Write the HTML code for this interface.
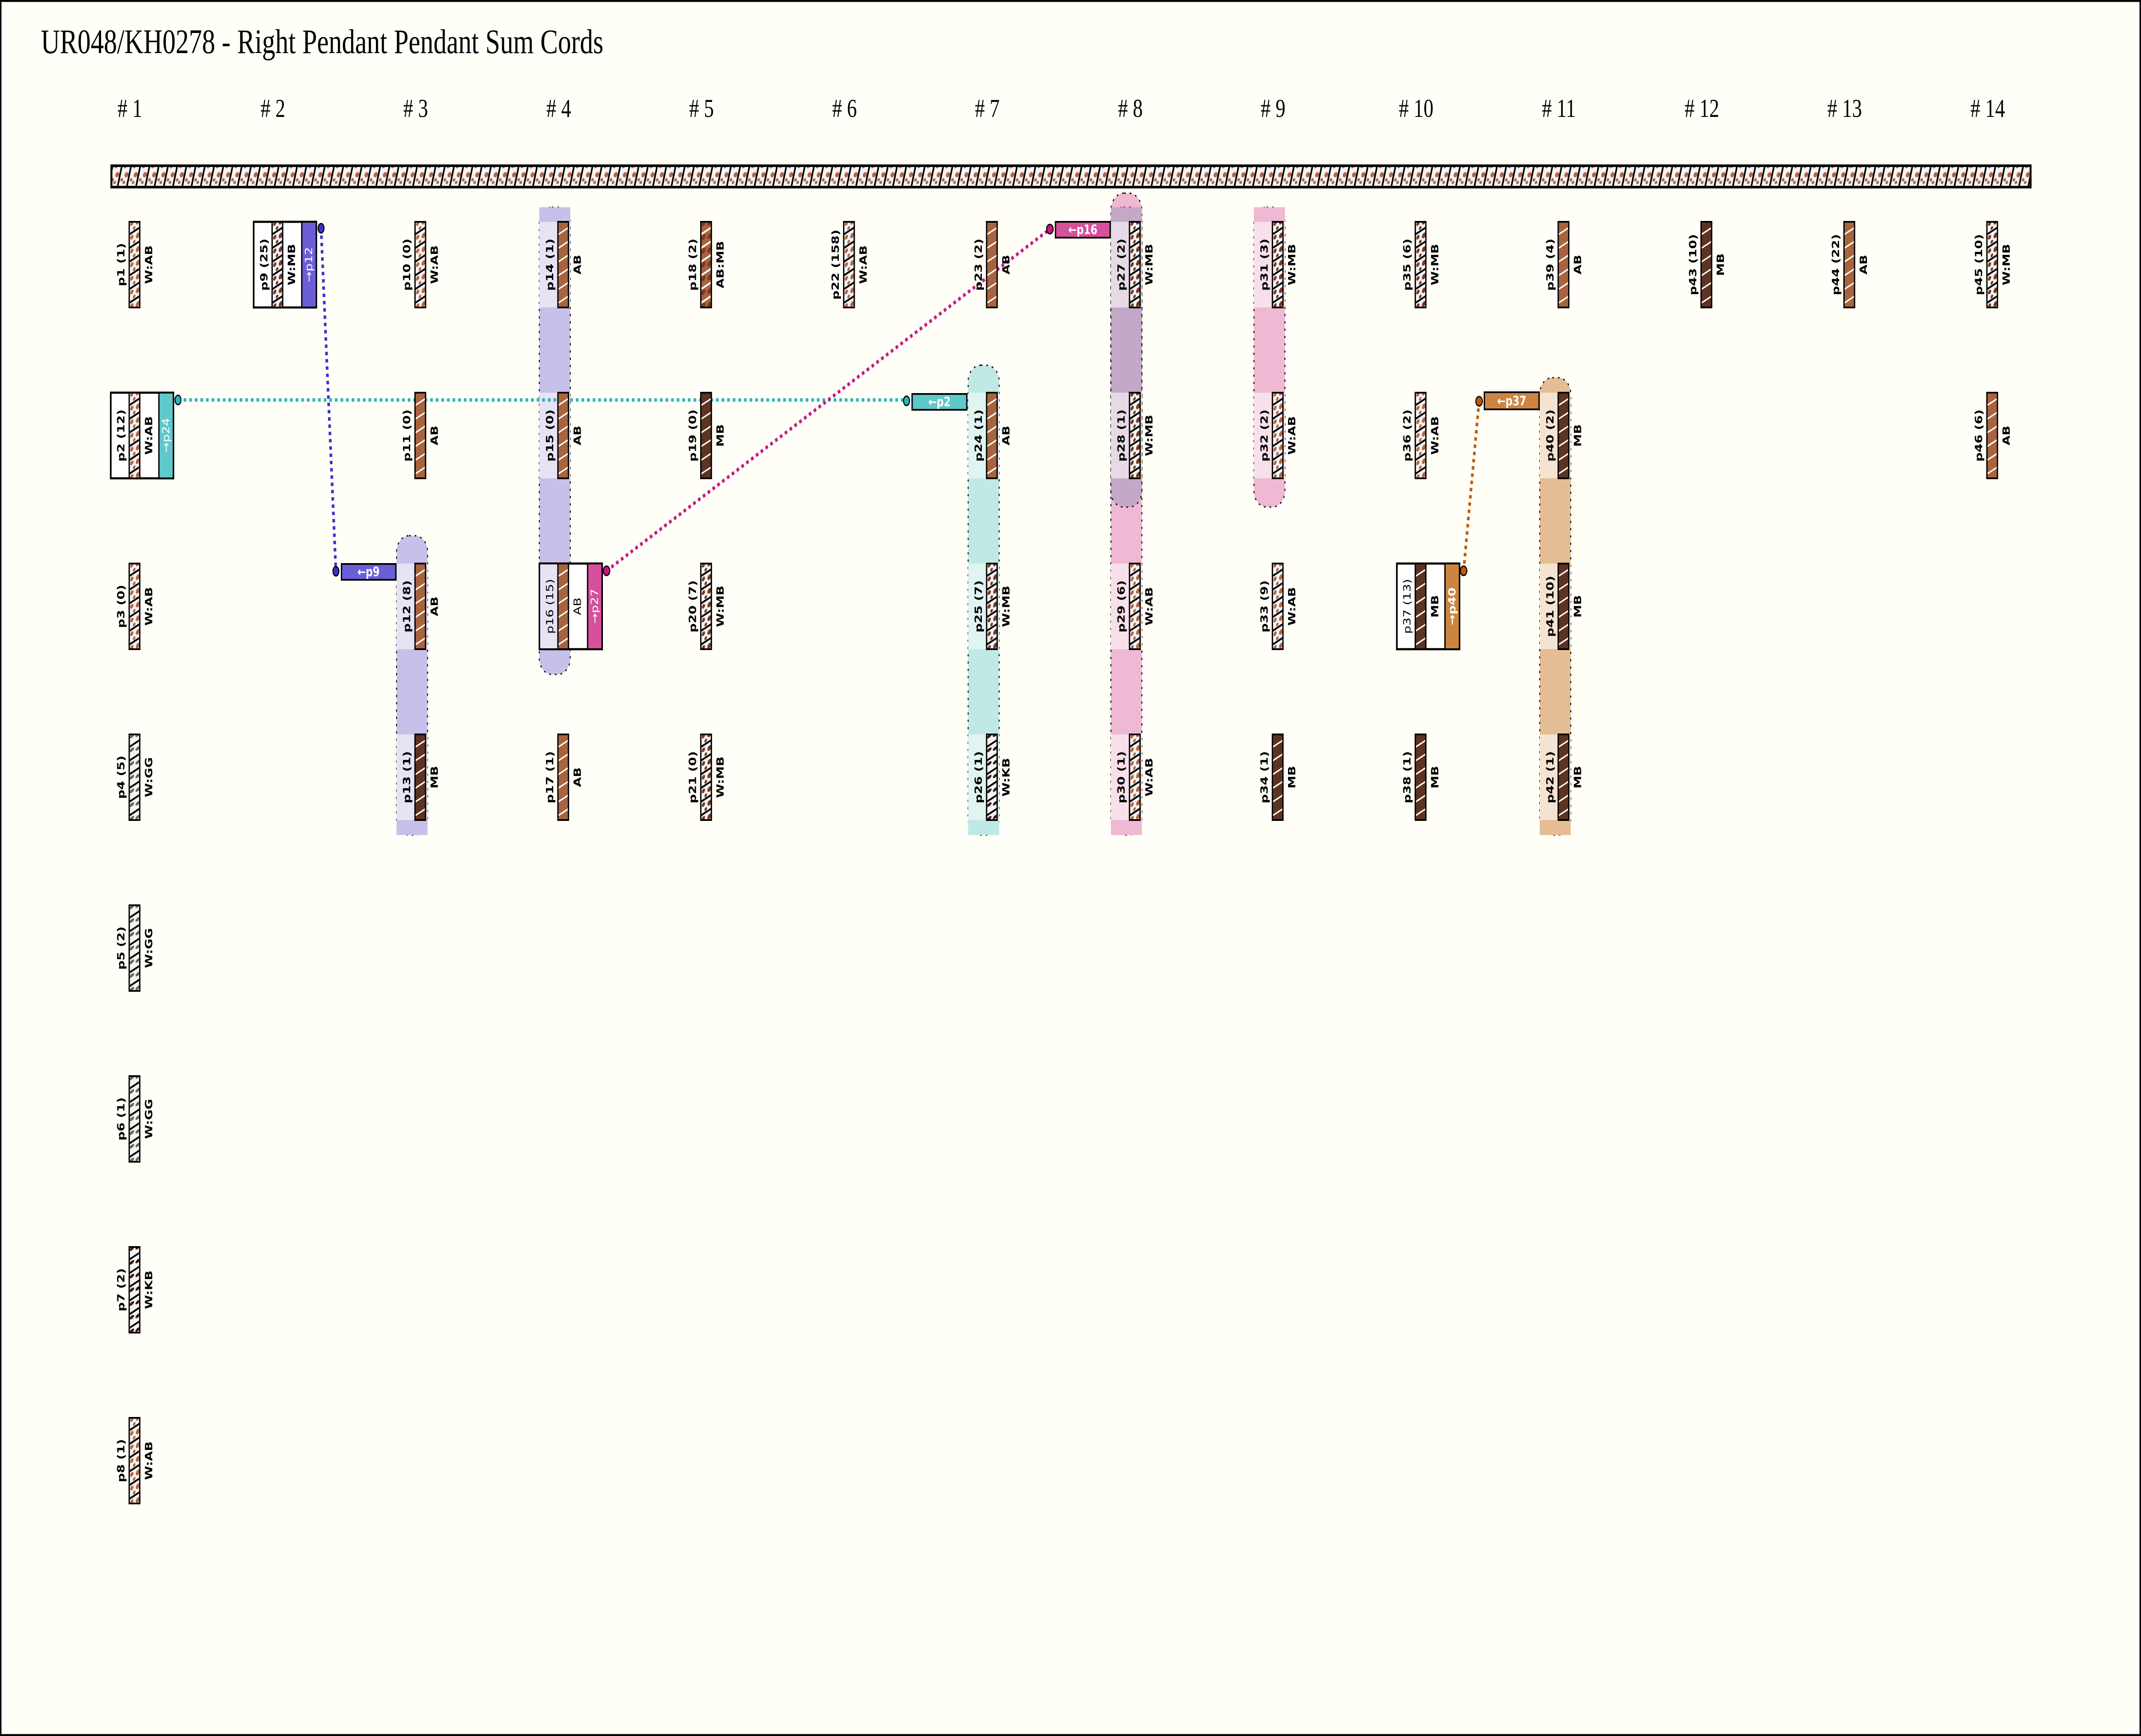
<!DOCTYPE html>
<html><head><meta charset="utf-8">
<style>
html,body{margin:0;padding:0;background:#fffef7;width:100%;height:100%;overflow:hidden;}
svg{display:block;width:100vw;height:100vh;}
text.l{font-family:"DejaVu Sans","Liberation Sans",sans-serif;font-weight:bold;font-size:30px;text-anchor:middle;dominant-baseline:central;fill:#000;}
text.w{font-family:"DejaVu Sans","Liberation Sans",sans-serif;font-weight:bold;font-size:30px;text-anchor:middle;dominant-baseline:central;fill:#fff;}
text.h{font-family:"Liberation Serif",serif;font-size:60px;text-anchor:middle;fill:#000;}
rect.c{stroke:#000;stroke-width:4;}
</style></head><body>
<svg viewBox="0 0 6495 4054" preserveAspectRatio="none" xmlns="http://www.w3.org/2000/svg">
<defs>
<pattern id="bar" patternUnits="userSpaceOnUse" width="28" height="54" patternTransform="skewX(-15)">
<rect width="28" height="54" fill="#f3f3f6"/>
<circle cx="8" cy="10" r="5" fill="#b5673e"/><circle cx="17" cy="30" r="6" fill="#b5673e"/><circle cx="6" cy="42" r="4" fill="#b5673e"/><circle cx="14" cy="48" r="4" fill="#b5673e"/>
<rect x="23" width="5" height="54" fill="#000"/>
</pattern>
<pattern id="wab" patternUnits="userSpaceOnUse" width="40" height="32" patternTransform="skewY(-27)">
<rect width="40" height="32" fill="#f3f3f6"/><circle cx="8" cy="8" r="5" fill="#b5673e"/><circle cx="26" cy="13" r="6" fill="#b5673e"/><circle cx="15" cy="22" r="4" fill="#b5673e"/><rect y="27" width="40" height="5" fill="#000"/></pattern>
<pattern id="wmb" patternUnits="userSpaceOnUse" width="40" height="32" patternTransform="skewY(-27)">
<rect width="40" height="32" fill="#f3f3f6"/><circle cx="8" cy="8" r="5" fill="#7a3a1e"/><circle cx="26" cy="13" r="6" fill="#7a3a1e"/><circle cx="15" cy="22" r="4" fill="#7a3a1e"/><rect y="27" width="40" height="5" fill="#000"/></pattern>
<pattern id="wgg" patternUnits="userSpaceOnUse" width="40" height="32" patternTransform="skewY(-27)">
<rect width="40" height="32" fill="#f3f3f6"/><ellipse cx="8" cy="8" rx="7" ry="4" fill="#646b5a"/><ellipse cx="26" cy="14" rx="7" ry="4" fill="#646b5a"/><rect y="27" width="40" height="5" fill="#000"/></pattern>
<pattern id="wkb" patternUnits="userSpaceOnUse" width="40" height="32" patternTransform="skewY(-27)">
<rect width="40" height="32" fill="#f3f3f6"/><ellipse cx="8" cy="8" rx="7" ry="4" fill="#3c1a10"/><ellipse cx="26" cy="14" rx="7" ry="4" fill="#3c1a10"/><rect y="27" width="40" height="5" fill="#000"/></pattern>
<pattern id="ab" patternUnits="userSpaceOnUse" width="40" height="32" patternTransform="skewY(-27)">
<rect width="40" height="32" fill="#a8643f"/><rect y="28" width="40" height="4" fill="#fff"/></pattern>
<pattern id="mb" patternUnits="userSpaceOnUse" width="40" height="32" patternTransform="skewY(-27)">
<rect width="40" height="32" fill="#5e3321"/><rect y="28" width="40" height="4" fill="#fff"/></pattern>
<pattern id="abmb" patternUnits="userSpaceOnUse" width="40" height="32" patternTransform="skewY(-27)">
<rect width="40" height="32" fill="#a8643f"/><circle cx="8" cy="8" r="6" fill="#7a3a1e"/><circle cx="26" cy="15" r="6" fill="#7a3a1e"/><rect y="27" width="40" height="5" fill="#fff"/></pattern>
</defs>

<rect x="2" y="2" width="6491" height="4050" fill="#fffef7" stroke="#000" stroke-width="5"/>
<text x="124" y="124" style="font-family:'Liberation Serif',serif;font-size:80px;">UR048/KH0278 - Right Pendant Pendant Sum Cords</text>

<g>
<text class="h" x="394" y="273"># 1</text>
<text class="h" x="828" y="273"># 2</text>
<text class="h" x="1261" y="273"># 3</text>
<text class="h" x="1695" y="273"># 4</text>
<text class="h" x="2128" y="273"># 5</text>
<text class="h" x="2562" y="273"># 6</text>
<text class="h" x="2995" y="273"># 7</text>
<text class="h" x="3429" y="273"># 8</text>
<text class="h" x="3862" y="273"># 9</text>
<text class="h" x="4296" y="273"># 10</text>
<text class="h" x="4729" y="273"># 11</text>
<text class="h" x="5163" y="273"># 12</text>
<text class="h" x="5596" y="273"># 13</text>
<text class="h" x="6030" y="273"># 14</text>
</g>

<rect x="338" y="387" width="5822" height="50" fill="url(#bar)" stroke="#000" stroke-width="6"/>

<g stroke="#000" stroke-width="3" stroke-dasharray="5 12">
<rect x="1203" y="1251" width="94" height="699" rx="38" fill="#c6c0ea"/>
<rect x="1203" y="1900" width="94" height="50" fill="#c6c0ea" stroke="none"/>
<rect x="1636" y="484" width="94" height="1091" rx="38" fill="#c6c0ea"/>
<rect x="1636" y="484" width="94" height="60" fill="#c6c0ea" stroke="none"/>
<rect x="2937" y="853" width="94" height="1097" rx="38" fill="#c0e9e5"/>
<rect x="2937" y="1900" width="94" height="50" fill="#c0e9e5" stroke="none"/>
<rect x="3370" y="451" width="94" height="1499" rx="40" fill="#efb8d3"/>
<rect x="3370" y="1900" width="94" height="50" fill="#efb8d3" stroke="none"/>
<rect x="3370" y="484" width="94" height="700" rx="38" fill="#c4a8c8"/>
<rect x="3370" y="484" width="94" height="60" fill="#c4a8c8" stroke="none"/>
<rect x="3804" y="484" width="94" height="700" rx="38" fill="#efb8d3"/>
<rect x="3804" y="484" width="94" height="60" fill="#efb8d3" stroke="none"/>
<rect x="4671" y="882" width="94" height="1068" rx="38" fill="#e4bd94"/>
<rect x="4671" y="1900" width="94" height="50" fill="#e4bd94" stroke="none"/>
</g>
<g>
<rect x="1203" y="1316" width="94" height="200" fill="#e6e3f4"/>
<rect x="1203" y="1715" width="94" height="200" fill="#e6e3f4"/>
<rect x="1636" y="518" width="94" height="200" fill="#e6e3f4"/>
<rect x="1636" y="917" width="94" height="200" fill="#e6e3f4"/>
<rect x="2937" y="917" width="94" height="200" fill="#e0f4f1"/>
<rect x="2937" y="1316" width="94" height="200" fill="#e0f4f1"/>
<rect x="2937" y="1715" width="94" height="200" fill="#e0f4f1"/>
<rect x="3370" y="518" width="94" height="200" fill="#e6dae6"/>
<rect x="3370" y="917" width="94" height="200" fill="#e6dae6"/>
<rect x="3370" y="1316" width="94" height="200" fill="#f7e0ea"/>
<rect x="3370" y="1715" width="94" height="200" fill="#f7e0ea"/>
<rect x="3804" y="518" width="94" height="200" fill="#f7e0ea"/>
<rect x="3804" y="917" width="94" height="200" fill="#f7e0ea"/>
<rect x="4671" y="917" width="94" height="200" fill="#f3e3d0"/>
<rect x="4671" y="1316" width="94" height="200" fill="#f3e3d0"/>
<rect x="4671" y="1715" width="94" height="200" fill="#f3e3d0"/>
</g>

<g stroke-width="8" stroke-dasharray="8 9" fill="none">
<line x1="974" y1="533" x2="1019" y2="1334" stroke="#3b2fd1"/>
<line x1="540" y1="934" x2="2750" y2="934" stroke="#2bb5ba"/>
<line x1="1840" y1="1333" x2="3185" y2="535" stroke="#c8177e"/>
<line x1="4440" y1="1333" x2="4487" y2="937" stroke="#c05a00"/>
</g>
<g stroke="#000" stroke-width="3">
<ellipse cx="974" cy="533" rx="9" ry="11" fill="#3b2fd1"/>
<ellipse cx="1019" cy="1334" rx="9" ry="11" fill="#3b2fd1"/>
<ellipse cx="540" cy="934" rx="9" ry="11" fill="#2bb5ba"/>
<ellipse cx="2750" cy="936" rx="9" ry="11" fill="#2bb5ba"/>
<ellipse cx="1840" cy="1333" rx="10" ry="11" fill="#c8177e"/>
<ellipse cx="3185" cy="535" rx="10" ry="11" fill="#c8177e"/>
<ellipse cx="4440" cy="1333" rx="10" ry="11" fill="#c05a00"/>
<ellipse cx="4487" cy="937" rx="10" ry="11" fill="#c05a00"/>
</g>
<g stroke="#000" stroke-width="4">
<rect x="1036" y="1317" width="165" height="37" fill="#6a5fd6"/>
<rect x="2767" y="920" width="166" height="37" fill="#5ec8ca"/>
<rect x="3202" y="518" width="166" height="37" fill="#d6509c"/>
<rect x="4503" y="916" width="166" height="40" fill="#cc8540"/>
</g>
<text class="w" x="1118" y="1336">←p9</text>
<text class="w" x="2850" y="939">←p2</text>
<text class="w" x="3285" y="537">←p16</text>
<text class="w" x="4586" y="937">←p37</text>

<g transform="translate(392,518)"><rect class="c" width="32" height="200" fill="url(#wab)"/><text class="l" transform="translate(-24,100) rotate(-90)">p1 (1)</text><text class="l" transform="translate(60,100) rotate(-90)">W:AB</text></g>
<g transform="translate(392,917)"><rect x="-56" width="190" height="200" fill="#fff" stroke="#000" stroke-width="5"/><rect x="90" width="44" height="200" fill="#5ec8ca" stroke="#000" stroke-width="4"/><rect class="c" width="32" height="200" fill="url(#wab)"/><text class="l" transform="translate(-24,100) rotate(-90)">p2 (12)</text><text class="l" transform="translate(60,100) rotate(-90)">W:AB</text><text class="w" style="font-weight:normal" transform="translate(112,100) rotate(-90)">→p24</text></g>
<g transform="translate(392,1316)"><rect class="c" width="32" height="200" fill="url(#wab)"/><text class="l" transform="translate(-24,100) rotate(-90)">p3 (0)</text><text class="l" transform="translate(60,100) rotate(-90)">W:AB</text></g>
<g transform="translate(392,1715)"><rect class="c" width="32" height="200" fill="url(#wgg)"/><text class="l" transform="translate(-24,100) rotate(-90)">p4 (5)</text><text class="l" transform="translate(60,100) rotate(-90)">W:GG</text></g>
<g transform="translate(392,2114)"><rect class="c" width="32" height="200" fill="url(#wgg)"/><text class="l" transform="translate(-24,100) rotate(-90)">p5 (2)</text><text class="l" transform="translate(60,100) rotate(-90)">W:GG</text></g>
<g transform="translate(392,2513)"><rect class="c" width="32" height="200" fill="url(#wgg)"/><text class="l" transform="translate(-24,100) rotate(-90)">p6 (1)</text><text class="l" transform="translate(60,100) rotate(-90)">W:GG</text></g>
<g transform="translate(392,2912)"><rect class="c" width="32" height="200" fill="url(#wkb)"/><text class="l" transform="translate(-24,100) rotate(-90)">p7 (2)</text><text class="l" transform="translate(60,100) rotate(-90)">W:KB</text></g>
<g transform="translate(392,3311)"><rect class="c" width="32" height="200" fill="url(#wab)"/><text class="l" transform="translate(-24,100) rotate(-90)">p8 (1)</text><text class="l" transform="translate(60,100) rotate(-90)">W:AB</text></g>

<g transform="translate(825.5,518)"><rect x="-56" width="190" height="200" fill="#fff" stroke="#000" stroke-width="5"/><rect x="90" width="44" height="200" fill="#6a5fd6" stroke="#000" stroke-width="4"/><rect class="c" width="32" height="200" fill="url(#wmb)"/><text class="l" transform="translate(-24,100) rotate(-90)">p9 (25)</text><text class="l" transform="translate(60,100) rotate(-90)">W:MB</text><text class="w" style="font-weight:normal" transform="translate(112,100) rotate(-90)">→p12</text></g>

<g transform="translate(1259,518)"><rect class="c" width="32" height="200" fill="url(#wab)"/><text class="l" transform="translate(-24,100) rotate(-90)">p10 (0)</text><text class="l" transform="translate(60,100) rotate(-90)">W:AB</text></g>
<g transform="translate(1259,917)"><rect class="c" width="32" height="200" fill="url(#ab)"/><text class="l" transform="translate(-24,100) rotate(-90)">p11 (0)</text><text class="l" transform="translate(60,100) rotate(-90)">AB</text></g>
<g transform="translate(1259,1316)"><rect class="c" width="32" height="200" fill="url(#ab)"/><text class="l" transform="translate(-24,100) rotate(-90)">p12 (8)</text><text class="l" transform="translate(60,100) rotate(-90)">AB</text></g>
<g transform="translate(1259,1715)"><rect class="c" width="32" height="200" fill="url(#mb)"/><text class="l" transform="translate(-24,100) rotate(-90)">p13 (1)</text><text class="l" transform="translate(60,100) rotate(-90)">MB</text></g>

<g transform="translate(1692.5,518)"><rect class="c" width="32" height="200" fill="url(#ab)"/><text class="l" transform="translate(-24,100) rotate(-90)">p14 (1)</text><text class="l" transform="translate(60,100) rotate(-90)">AB</text></g>
<g transform="translate(1692.5,917)"><rect class="c" width="32" height="200" fill="url(#ab)"/><text class="l" transform="translate(-24,100) rotate(-90)">p15 (0)</text><text class="l" transform="translate(60,100) rotate(-90)">AB</text></g>
<g transform="translate(1692.5,1316)"><rect x="-56" width="190" height="200" fill="#fff" stroke="#000" stroke-width="5"/><rect x="-54" y="2" width="54" height="196" fill="#e6e3f4"/><rect x="90" width="44" height="200" fill="#d6509c" stroke="#000" stroke-width="4"/><rect class="c" width="32" height="200" fill="url(#ab)"/><text class="l" style="font-weight:normal" transform="translate(-24,100) rotate(-90)">p16 (15)</text><text class="l" style="font-weight:normal" transform="translate(60,100) rotate(-90)">AB</text><text class="w" style="font-weight:normal" transform="translate(112,100) rotate(-90)">→p27</text></g>
<g transform="translate(1692.5,1715)"><rect class="c" width="32" height="200" fill="url(#ab)"/><text class="l" transform="translate(-24,100) rotate(-90)">p17 (1)</text><text class="l" transform="translate(60,100) rotate(-90)">AB</text></g>

<g transform="translate(2126,518)"><rect class="c" width="32" height="200" fill="url(#abmb)"/><text class="l" transform="translate(-24,100) rotate(-90)">p18 (2)</text><text class="l" transform="translate(60,100) rotate(-90)">AB:MB</text></g>
<g transform="translate(2126,917)"><rect class="c" width="32" height="200" fill="url(#mb)"/><text class="l" transform="translate(-24,100) rotate(-90)">p19 (0)</text><text class="l" transform="translate(60,100) rotate(-90)">MB</text></g>
<g transform="translate(2126,1316)"><rect class="c" width="32" height="200" fill="url(#wmb)"/><text class="l" transform="translate(-24,100) rotate(-90)">p20 (7)</text><text class="l" transform="translate(60,100) rotate(-90)">W:MB</text></g>
<g transform="translate(2126,1715)"><rect class="c" width="32" height="200" fill="url(#wmb)"/><text class="l" transform="translate(-24,100) rotate(-90)">p21 (0)</text><text class="l" transform="translate(60,100) rotate(-90)">W:MB</text></g>

<g transform="translate(2559.5,518)"><rect class="c" width="32" height="200" fill="url(#wab)"/><text class="l" transform="translate(-24,100) rotate(-90)">p22 (158)</text><text class="l" transform="translate(60,100) rotate(-90)">W:AB</text></g>

<g transform="translate(2993,518)"><rect class="c" width="32" height="200" fill="url(#ab)"/><text class="l" transform="translate(-24,100) rotate(-90)">p23 (2)</text><text class="l" transform="translate(60,100) rotate(-90)">AB</text></g>
<g transform="translate(2993,917)"><rect class="c" width="32" height="200" fill="url(#ab)"/><text class="l" transform="translate(-24,100) rotate(-90)">p24 (1)</text><text class="l" transform="translate(60,100) rotate(-90)">AB</text></g>
<g transform="translate(2993,1316)"><rect class="c" width="32" height="200" fill="url(#wmb)"/><text class="l" transform="translate(-24,100) rotate(-90)">p25 (7)</text><text class="l" transform="translate(60,100) rotate(-90)">W:MB</text></g>
<g transform="translate(2993,1715)"><rect class="c" width="32" height="200" fill="url(#wkb)"/><text class="l" transform="translate(-24,100) rotate(-90)">p26 (1)</text><text class="l" transform="translate(60,100) rotate(-90)">W:KB</text></g>

<g transform="translate(3426.5,518)"><rect class="c" width="32" height="200" fill="url(#wmb)"/><text class="l" transform="translate(-24,100) rotate(-90)">p27 (2)</text><text class="l" transform="translate(60,100) rotate(-90)">W:MB</text></g>
<g transform="translate(3426.5,917)"><rect class="c" width="32" height="200" fill="url(#wmb)"/><text class="l" transform="translate(-24,100) rotate(-90)">p28 (1)</text><text class="l" transform="translate(60,100) rotate(-90)">W:MB</text></g>
<g transform="translate(3426.5,1316)"><rect class="c" width="32" height="200" fill="url(#wab)"/><text class="l" transform="translate(-24,100) rotate(-90)">p29 (6)</text><text class="l" transform="translate(60,100) rotate(-90)">W:AB</text></g>
<g transform="translate(3426.5,1715)"><rect class="c" width="32" height="200" fill="url(#wab)"/><text class="l" transform="translate(-24,100) rotate(-90)">p30 (1)</text><text class="l" transform="translate(60,100) rotate(-90)">W:AB</text></g>

<g transform="translate(3860,518)"><rect class="c" width="32" height="200" fill="url(#wmb)"/><text class="l" transform="translate(-24,100) rotate(-90)">p31 (3)</text><text class="l" transform="translate(60,100) rotate(-90)">W:MB</text></g>
<g transform="translate(3860,917)"><rect class="c" width="32" height="200" fill="url(#wab)"/><text class="l" transform="translate(-24,100) rotate(-90)">p32 (2)</text><text class="l" transform="translate(60,100) rotate(-90)">W:AB</text></g>
<g transform="translate(3860,1316)"><rect class="c" width="32" height="200" fill="url(#wab)"/><text class="l" transform="translate(-24,100) rotate(-90)">p33 (9)</text><text class="l" transform="translate(60,100) rotate(-90)">W:AB</text></g>
<g transform="translate(3860,1715)"><rect class="c" width="32" height="200" fill="url(#mb)"/><text class="l" transform="translate(-24,100) rotate(-90)">p34 (1)</text><text class="l" transform="translate(60,100) rotate(-90)">MB</text></g>

<g transform="translate(4293.5,518)"><rect class="c" width="32" height="200" fill="url(#wmb)"/><text class="l" transform="translate(-24,100) rotate(-90)">p35 (6)</text><text class="l" transform="translate(60,100) rotate(-90)">W:MB</text></g>
<g transform="translate(4293.5,917)"><rect class="c" width="32" height="200" fill="url(#wab)"/><text class="l" transform="translate(-24,100) rotate(-90)">p36 (2)</text><text class="l" transform="translate(60,100) rotate(-90)">W:AB</text></g>
<g transform="translate(4293.5,1316)"><rect x="-56" width="190" height="200" fill="#fff" stroke="#000" stroke-width="5"/><rect x="90" width="44" height="200" fill="#cc8540" stroke="#000" stroke-width="4"/><rect class="c" width="32" height="200" fill="url(#mb)"/><text class="l" style="font-weight:normal" transform="translate(-24,100) rotate(-90)">p37 (13)</text><text class="l" transform="translate(60,100) rotate(-90)">MB</text><text class="w" transform="translate(112,100) rotate(-90)">→p40</text></g>
<g transform="translate(4293.5,1715)"><rect class="c" width="32" height="200" fill="url(#mb)"/><text class="l" transform="translate(-24,100) rotate(-90)">p38 (1)</text><text class="l" transform="translate(60,100) rotate(-90)">MB</text></g>

<g transform="translate(4727,518)"><rect class="c" width="32" height="200" fill="url(#ab)"/><text class="l" transform="translate(-24,100) rotate(-90)">p39 (4)</text><text class="l" transform="translate(60,100) rotate(-90)">AB</text></g>
<g transform="translate(4727,917)"><rect class="c" width="32" height="200" fill="url(#mb)"/><text class="l" transform="translate(-24,100) rotate(-90)">p40 (2)</text><text class="l" transform="translate(60,100) rotate(-90)">MB</text></g>
<g transform="translate(4727,1316)"><rect class="c" width="32" height="200" fill="url(#mb)"/><text class="l" transform="translate(-24,100) rotate(-90)">p41 (10)</text><text class="l" transform="translate(60,100) rotate(-90)">MB</text></g>
<g transform="translate(4727,1715)"><rect class="c" width="32" height="200" fill="url(#mb)"/><text class="l" transform="translate(-24,100) rotate(-90)">p42 (1)</text><text class="l" transform="translate(60,100) rotate(-90)">MB</text></g>

<g transform="translate(5160.5,518)"><rect class="c" width="32" height="200" fill="url(#mb)"/><text class="l" transform="translate(-24,100) rotate(-90)">p43 (10)</text><text class="l" transform="translate(60,100) rotate(-90)">MB</text></g>
<g transform="translate(5594,518)"><rect class="c" width="32" height="200" fill="url(#ab)"/><text class="l" transform="translate(-24,100) rotate(-90)">p44 (22)</text><text class="l" transform="translate(60,100) rotate(-90)">AB</text></g>
<g transform="translate(6027.5,518)"><rect class="c" width="32" height="200" fill="url(#wmb)"/><text class="l" transform="translate(-24,100) rotate(-90)">p45 (10)</text><text class="l" transform="translate(60,100) rotate(-90)">W:MB</text></g>
<g transform="translate(6027.5,917)"><rect class="c" width="32" height="200" fill="url(#ab)"/><text class="l" transform="translate(-24,100) rotate(-90)">p46 (6)</text><text class="l" transform="translate(60,100) rotate(-90)">AB</text></g>
</svg>
</body></html>
